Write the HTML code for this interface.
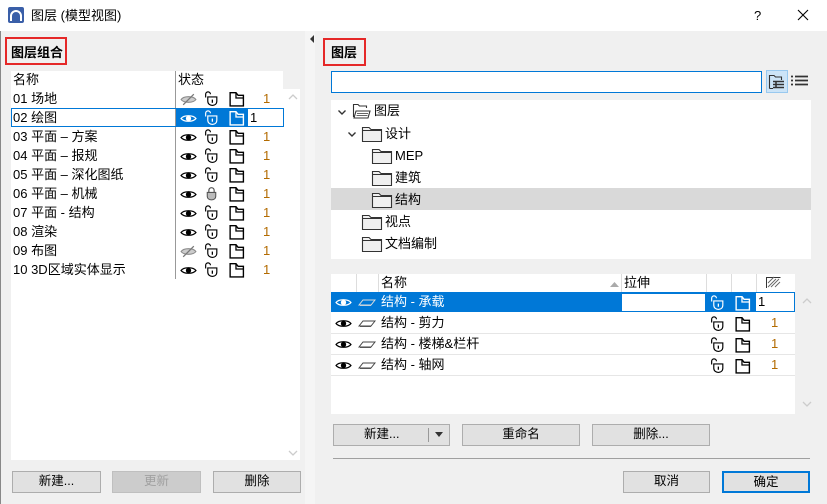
<!DOCTYPE html>
<html><head><meta charset="utf-8">
<style>
*{margin:0;padding:0;box-sizing:border-box}
body{width:827px;height:504px;background:#f0f0f0;font-family:"Liberation Sans","Noto Sans CJK SC",sans-serif;font-size:13px;color:#000;position:relative;overflow:hidden}
.a{position:absolute}
.t{position:absolute;white-space:nowrap;line-height:17px}
.btn{position:absolute;background:#e1e1e1;border:1px solid #adadad;text-align:center;line-height:19px;font-size:12.5px}
.ic{position:absolute;width:17px;height:17px}
.n{position:absolute;color:#b36b00;font-size:13px;line-height:17px}
.fold{position:absolute;width:22px;height:18px}
</style></head><body>
<svg width="0" height="0" style="position:absolute">
<defs>
<symbol id="eye" viewBox="0 0 16 16"><path d="M1 8C3.5 4.5 12.5 4.5 15 8C12.5 11.5 3.5 11.5 1 8Z" fill="none" stroke="currentColor" stroke-width="1.2"/><circle cx="8" cy="8" r="2.5" fill="currentColor"/></symbol>
<symbol id="eyex" viewBox="0 0 16 16"><path d="M1 8C3.5 4.5 12.5 4.5 15 8C12.5 11.5 3.5 11.5 1 8Z" fill="#ccc" stroke="#888" stroke-width="1"/><path d="M3 13L13 3" stroke="#777" stroke-width="1.2"/></symbol>
<symbol id="lock" viewBox="0 0 16 16"><path d="M2.5 7V4A2.2 2.2 0 0 1 7 4" fill="none" stroke="currentColor" stroke-width="1.1"/><path d="M4.5 6.5H13V10.5C13 13.2 11 14.5 8.8 14.5S4.5 13.2 4.5 10.5Z" fill="none" stroke="currentColor" stroke-width="1.1"/><path d="M8.8 9V12" stroke="currentColor" stroke-width="1.2"/></symbol>
<symbol id="lockc" viewBox="0 0 16 16"><path d="M5.5 7V5A2.5 2.5 0 0 1 10.5 5V7" fill="none" stroke="#555" stroke-width="1.1"/><path d="M4 7H12V10.5C12 13 10 14 8 14S4 13 4 10.5Z" fill="#bbb" stroke="#555"/></symbol>
<symbol id="doc" viewBox="0 0 16 16"><path d="M2 15V2.5H7.5L9.5 5H14.5V15Z" fill="none" stroke="currentColor" stroke-width="1.3"/><path d="M7.5 2.5V7.5H14.5" fill="none" stroke="currentColor" stroke-width="1.2"/></symbol>
<symbol id="lay" viewBox="0 0 18 16"><path d="M1 11L5 6H17L13 11Z" fill="none" stroke="currentColor" stroke-width="1"/><path d="M2 11.5H13" stroke="currentColor" stroke-width="0.8"/></symbol>
<symbol id="fd" viewBox="0 0 22 18"><path d="M1.5 16.5V2.5H8L10 4.5H20.5V16.5Z" fill="#f0f0f0" stroke="#333" stroke-width="1.1"/><path d="M1.5 5.5H20.5" stroke="#333" stroke-width="1"/></symbol>
<symbol id="chev" viewBox="0 0 10 10"><path d="M1.5 3.5L5 7L8.5 3.5" fill="none" stroke="#333" stroke-width="1.4"/></symbol>
</defs></svg>

<div class="a" style="left:0;top:0;width:827px;height:31px;background:#fff"></div>
<svg class="a" style="left:8px;top:7px" width="16" height="16"><rect width="16" height="16" rx="2" fill="#3a5fa8"/><path d="M3 14V9A5 5 0 0 1 13 9V14" fill="none" stroke="#fff" stroke-width="2"/></svg>
<div class="t" style="left:31px;top:7px;font-size:13px">图层 (模型视图)</div>
<div class="t" style="left:754px;top:7px;font-size:13px">?</div>
<svg class="a" style="left:797px;top:9px" width="12" height="12"><path d="M1 1L11 11M11 1L1 11" stroke="#000" stroke-width="1.1"/></svg>
<div class="a" style="left:0;top:31px;width:1px;height:473px;background:#888"></div>

<div class="a" style="left:5px;top:37px;width:62px;height:28px;border:2px solid #e52828"></div>
<div class="t" style="left:11px;top:44px;font-weight:bold">图层组合</div>
<div class="a" style="left:11px;top:71px;width:289px;height:389px;background:#fff"></div>
<div class="a" style="left:283px;top:71px;width:17px;height:18px;background:#f0f0f0"></div>
<div class="t" style="left:13px;top:71px">名称</div>
<div class="t" style="left:178px;top:71px">状态</div>
<div class="a" style="left:175px;top:71px;width:1px;height:208px;background:#999"></div>
<svg class="a" style="left:288px;top:93px" width="10" height="8"><path d="M1 6L5 2L9 6" fill="none" stroke="#ccc" stroke-width="1.3"/></svg>
<svg class="a" style="left:288px;top:449px" width="10" height="8"><path d="M1 2L5 6L9 2" fill="none" stroke="#ccc" stroke-width="1.3"/></svg>

<div class="a" style="left:11px;top:108px;width:273px;height:19px;border:1px solid #0078d7"></div>
<div class="a" style="left:176px;top:109px;width:72px;height:17px;background:#0078d7"></div>

<div class="t" style="left:13px;top:90px">01 场地</div>
<div class="t" style="left:13px;top:109px">02 绘图</div>
<div class="t" style="left:13px;top:128px">03 平面 – 方案</div>
<div class="t" style="left:13px;top:147px">04 平面 – 报规</div>
<div class="t" style="left:13px;top:166px">05 平面 – 深化图纸</div>
<div class="t" style="left:13px;top:185px">06 平面 – 机械</div>
<div class="t" style="left:13px;top:204px">07 平面 - 结构</div>
<div class="t" style="left:13px;top:223px">08 渲染</div>
<div class="t" style="left:13px;top:242px">09 布图</div>
<div class="t" style="left:13px;top:261px">10 3D区域实体显示</div>

<svg class="ic" style="left:180px;top:91px"><use href="#eyex"/></svg>
<svg class="ic" style="left:180px;top:110px;color:#fff"><use href="#eye"/></svg>
<svg class="ic" style="left:180px;top:129px"><use href="#eye"/></svg>
<svg class="ic" style="left:180px;top:148px"><use href="#eye"/></svg>
<svg class="ic" style="left:180px;top:167px"><use href="#eye"/></svg>
<svg class="ic" style="left:180px;top:186px"><use href="#eye"/></svg>
<svg class="ic" style="left:180px;top:205px"><use href="#eye"/></svg>
<svg class="ic" style="left:180px;top:224px"><use href="#eye"/></svg>
<svg class="ic" style="left:180px;top:243px"><use href="#eyex"/></svg>
<svg class="ic" style="left:180px;top:262px"><use href="#eye"/></svg>

<svg class="ic" style="left:203px;top:90px"><use href="#lock"/></svg>
<svg class="ic" style="left:203px;top:109px;color:#fff"><use href="#lock"/></svg>
<svg class="ic" style="left:203px;top:128px"><use href="#lock"/></svg>
<svg class="ic" style="left:203px;top:147px"><use href="#lock"/></svg>
<svg class="ic" style="left:203px;top:166px"><use href="#lock"/></svg>
<svg class="ic" style="left:203px;top:185px"><use href="#lockc"/></svg>
<svg class="ic" style="left:203px;top:204px"><use href="#lock"/></svg>
<svg class="ic" style="left:203px;top:223px"><use href="#lock"/></svg>
<svg class="ic" style="left:203px;top:242px"><use href="#lock"/></svg>
<svg class="ic" style="left:203px;top:261px"><use href="#lock"/></svg>

<svg class="ic" style="left:228px;top:90px"><use href="#doc"/></svg>
<svg class="ic" style="left:228px;top:109px;color:#fff"><use href="#doc"/></svg>
<svg class="ic" style="left:228px;top:128px"><use href="#doc"/></svg>
<svg class="ic" style="left:228px;top:147px"><use href="#doc"/></svg>
<svg class="ic" style="left:228px;top:166px"><use href="#doc"/></svg>
<svg class="ic" style="left:228px;top:185px"><use href="#doc"/></svg>
<svg class="ic" style="left:228px;top:204px"><use href="#doc"/></svg>
<svg class="ic" style="left:228px;top:223px"><use href="#doc"/></svg>
<svg class="ic" style="left:228px;top:242px"><use href="#doc"/></svg>
<svg class="ic" style="left:228px;top:261px"><use href="#doc"/></svg>

<div class="n" style="left:263px;top:90px">1</div>
<div class="a" style="left:248px;top:109px;width:35px;height:17px;background:#fff"></div>
<div class="t" style="left:250px;top:109px">1</div>
<div class="n" style="left:263px;top:128px">1</div>
<div class="n" style="left:263px;top:147px">1</div>
<div class="n" style="left:263px;top:166px">1</div>
<div class="n" style="left:263px;top:185px">1</div>
<div class="n" style="left:263px;top:204px">1</div>
<div class="n" style="left:263px;top:223px">1</div>
<div class="n" style="left:263px;top:242px">1</div>
<div class="n" style="left:263px;top:261px">1</div>

<div class="btn" style="left:12px;top:471px;width:89px;height:22px">新建...</div>
<div class="btn" style="left:112px;top:471px;width:89px;height:22px;background:#cccccc;border-color:#bfbfbf;color:#a0a0a0">更新</div>
<div class="btn" style="left:213px;top:471px;width:88px;height:22px">删除</div>

<div class="a" style="left:305px;top:31px;width:10px;height:473px;background:#f5f5f5"></div>
<svg class="a" style="left:309px;top:34px" width="6" height="10"><path d="M5 1L1 5L5 9Z" fill="#333"/></svg>

<div class="a" style="left:323px;top:38px;width:43px;height:28px;border:2px solid #e52828"></div>
<div class="t" style="left:331px;top:44px;font-weight:bold">图层</div>
<div class="a" style="left:331px;top:71px;width:431px;height:22px;background:#fff;border:1px solid #0078d7"></div>
<div class="a" style="left:766px;top:70px;width:22px;height:23px;background:#cce4f7;border:1px solid #99c9ef"></div>
<svg class="a" style="left:768px;top:73px" width="18" height="18"><path d="M1.5 15.5V2.5H6L7.5 4H13.5V7" fill="none" stroke="#333" stroke-width="1.1"/><path d="M1.5 15.5H5" stroke="#333"/><path d="M5 8.5H16M5 11.5H16M5 14.5H16M8 8V15" stroke="#333" stroke-width="1.5"/></svg>
<svg class="a" style="left:791px;top:74px" width="17" height="14"><path d="M0 2.5H2M4 2.5H17M0 6.5H2M4 6.5H17M0 10.5H2M4 10.5H17" stroke="#333" stroke-width="1.8"/></svg>

<div class="a" style="left:331px;top:100px;width:480px;height:159px;background:#fff"></div>
<div class="a" style="left:331px;top:188px;width:480px;height:22px;background:#d9d9d9"></div>
<svg class="a" style="left:337px;top:107px" width="10" height="10"><use href="#chev"/></svg>
<svg class="a" style="left:352px;top:102px" width="20" height="18"><path d="M1.5 15V2.5H6L7.5 4H14.5V6" fill="none" stroke="#333" stroke-width="1.1"/><path d="M4 9H18L16 16H2Z" fill="#fff" stroke="#333" stroke-width="1.1"/><path d="M5 11.5H16M4.5 13.5H15.5" stroke="#333" stroke-width="0.8"/></svg>
<div class="t" style="left:374px;top:102px">图层</div>
<svg class="a" style="left:347px;top:129px" width="10" height="10"><use href="#chev"/></svg>
<svg class="fold" style="left:361px;top:125px"><use href="#fd"/></svg>
<div class="t" style="left:385px;top:125px">设计</div>
<svg class="fold" style="left:371px;top:147px"><use href="#fd"/></svg>
<div class="t" style="left:395px;top:147px">MEP</div>
<svg class="fold" style="left:371px;top:169px"><use href="#fd"/></svg>
<div class="t" style="left:395px;top:169px">建筑</div>
<svg class="fold" style="left:371px;top:191px"><use href="#fd"/></svg>
<div class="t" style="left:395px;top:191px">结构</div>
<svg class="fold" style="left:361px;top:213px"><use href="#fd"/></svg>
<div class="t" style="left:385px;top:213px">视点</div>
<svg class="fold" style="left:361px;top:235px"><use href="#fd"/></svg>
<div class="t" style="left:385px;top:235px">文档编制</div>

<div class="a" style="left:331px;top:274px;width:480px;height:140px;background:#fff"></div>
<div class="a" style="left:795px;top:274px;width:16px;height:140px;background:#f0f0f0"></div>
<div class="a" style="left:331px;top:292px;width:464px;height:1px;background:#ddd"></div>
<div class="a" style="left:356px;top:274px;width:1px;height:18px;background:#ddd"></div>
<div class="a" style="left:378px;top:274px;width:1px;height:18px;background:#ddd"></div>
<div class="a" style="left:621px;top:274px;width:1px;height:18px;background:#ddd"></div>
<div class="a" style="left:706px;top:274px;width:1px;height:18px;background:#ddd"></div>
<div class="a" style="left:731px;top:274px;width:1px;height:18px;background:#ddd"></div>
<div class="a" style="left:756px;top:274px;width:1px;height:18px;background:#ddd"></div>
<div class="t" style="left:381px;top:274px">名称</div>
<svg class="a" style="left:610px;top:281px" width="9" height="6"><path d="M0 6L4.5 1L9 6Z" fill="#aaa"/></svg>
<div class="t" style="left:624px;top:274px">拉伸</div>
<svg class="a" style="left:765px;top:276px" width="16" height="12"><path d="M1.5 12V1.5H15.5" fill="none" stroke="#333"/><path d="M3 11L11 3M6 11L14 3M3 7L9 1M10 11L15 6" stroke="#666" stroke-width="0.9"/></svg>

<div class="a" style="left:331px;top:292px;width:464px;height:20px;background:#0078d7"></div>
<div class="a" style="left:622px;top:294px;width:83px;height:17px;background:#fff"></div>
<div class="a" style="left:756px;top:293px;width:38px;height:18px;background:#fff"></div>
<div class="t" style="left:758px;top:293px">1</div>
<div class="a" style="left:331px;top:333px;width:464px;height:1px;background:#e6e6e6"></div>
<div class="a" style="left:331px;top:354px;width:464px;height:1px;background:#e6e6e6"></div>
<div class="a" style="left:331px;top:375px;width:464px;height:1px;background:#e6e6e6"></div>
<svg class="a" style="left:802px;top:297px" width="10" height="8"><path d="M1 6L5 2L9 6" fill="none" stroke="#ccc" stroke-width="1.3"/></svg>
<svg class="a" style="left:802px;top:400px" width="10" height="8"><path d="M1 2L5 6L9 2" fill="none" stroke="#ccc" stroke-width="1.3"/></svg>

<svg class="ic" style="left:335px;top:294px;color:#fff"><use href="#eye"/></svg>
<svg class="ic" style="left:335px;top:315px"><use href="#eye"/></svg>
<svg class="ic" style="left:335px;top:336px"><use href="#eye"/></svg>
<svg class="ic" style="left:335px;top:357px"><use href="#eye"/></svg>
<svg class="a" style="left:358px;top:294px;color:#ddd" width="18" height="16"><use href="#lay"/></svg>
<svg class="a" style="left:358px;top:315px;color:#444" width="18" height="16"><use href="#lay"/></svg>
<svg class="a" style="left:358px;top:336px;color:#444" width="18" height="16"><use href="#lay"/></svg>
<svg class="a" style="left:358px;top:357px;color:#444" width="18" height="16"><use href="#lay"/></svg>
<div class="t" style="left:381px;top:293px;color:#fff">结构 - 承载</div>
<div class="t" style="left:381px;top:314px">结构 - 剪力</div>
<div class="t" style="left:381px;top:335px">结构 - 楼梯&amp;栏杆</div>
<div class="t" style="left:381px;top:356px">结构 - 轴网</div>
<svg class="ic" style="left:709px;top:294px;color:#fff"><use href="#lock"/></svg>
<svg class="ic" style="left:709px;top:315px"><use href="#lock"/></svg>
<svg class="ic" style="left:709px;top:336px"><use href="#lock"/></svg>
<svg class="ic" style="left:709px;top:357px"><use href="#lock"/></svg>
<svg class="ic" style="left:734px;top:294px;color:#fff"><use href="#doc"/></svg>
<svg class="ic" style="left:734px;top:315px"><use href="#doc"/></svg>
<svg class="ic" style="left:734px;top:336px"><use href="#doc"/></svg>
<svg class="ic" style="left:734px;top:357px"><use href="#doc"/></svg>
<div class="n" style="left:771px;top:314px">1</div>
<div class="n" style="left:771px;top:335px">1</div>
<div class="n" style="left:771px;top:356px">1</div>

<div class="btn" style="left:333px;top:424px;width:117px;height:22px;text-align:left;padding-left:30px">新建...</div>
<div class="a" style="left:428px;top:428px;width:1px;height:14px;background:#999"></div>
<svg class="a" style="left:435px;top:432px" width="8" height="5"><path d="M0 0H8L4 5Z" fill="#333"/></svg>
<div class="btn" style="left:462px;top:424px;width:118px;height:22px">重命名</div>
<div class="btn" style="left:592px;top:424px;width:118px;height:22px">删除...</div>
<div class="a" style="left:333px;top:458px;width:477px;height:1px;background:#a0a0a0"></div>
<div class="btn" style="left:623px;top:471px;width:87px;height:22px">取消</div>
<div class="btn" style="left:722px;top:471px;width:88px;height:22px;border:2px solid #0078d7;line-height:18px">确定</div>
</body></html>
